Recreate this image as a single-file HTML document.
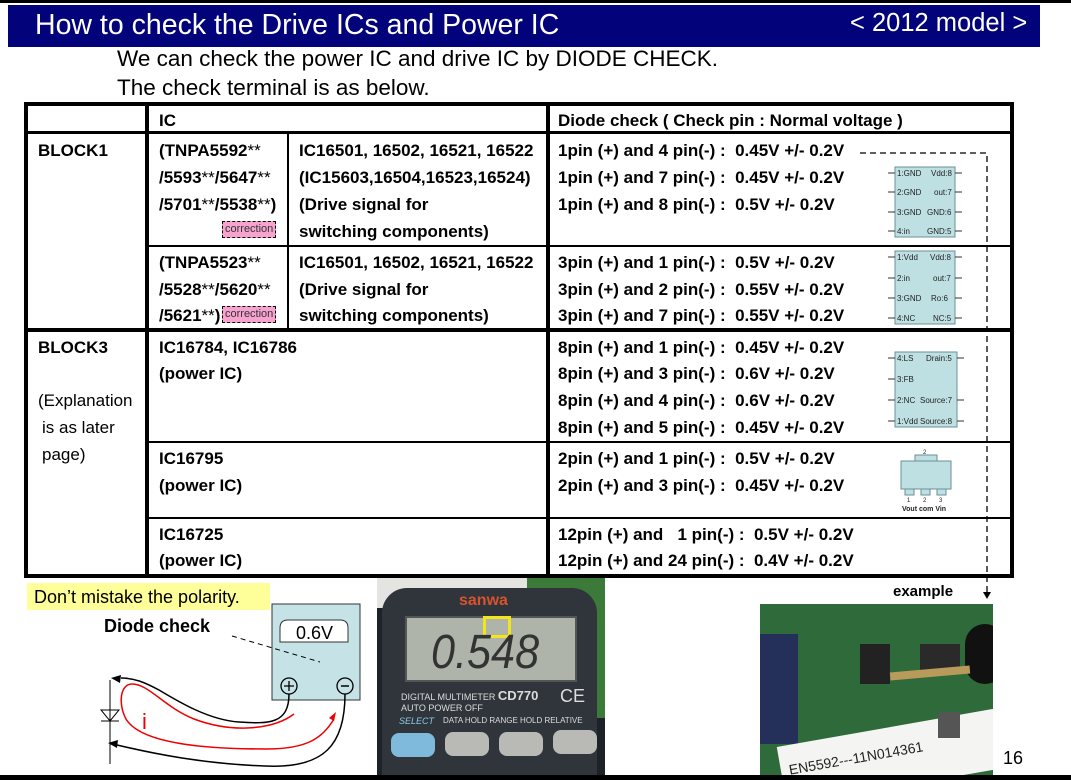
<!DOCTYPE html>
<html><head><meta charset="utf-8"><style>
*{margin:0;padding:0;box-sizing:border-box}
body{width:1071px;height:780px;background:#fff;position:relative;overflow:hidden;font-family:"Liberation Sans",Arial,sans-serif;color:#000}
.a{position:absolute}
.t{position:absolute;font-weight:bold;font-size:17px;line-height:18px;white-space:pre}
.n{position:absolute;font-size:17px;line-height:18px;white-space:pre}
.bl{position:absolute;background:#000}
.corr{position:absolute;background:#f7a3cf;border:1px dashed #000;font-size:11px;line-height:15px;padding:0 2px;color:#333}
</style></head><body>
<div class="bl" style="left:0;top:0;width:1071px;height:3px"></div>
<div class="a" style="left:8px;top:5px;width:1032px;height:42px;background:#02027a"></div>
<div class="a" style="left:35px;top:7px;color:#fff;font-size:28.5px;line-height:36px">How to check the Drive ICs and Power IC</div>
<div class="a" style="left:850px;top:6px;color:#fff;font-size:25.5px;line-height:34px">&lt; 2012 model &gt;</div>
<div class="a" style="left:117px;top:46px;font-size:22.5px;line-height:26px">We can check the power IC and drive IC by DIODE CHECK.</div>
<div class="a" style="left:117px;top:75px;font-size:22.5px;line-height:26px">The check terminal is as below.</div>

<div class="a" style="left:24px;top:102px;width:990px;height:476px;border:4px solid #000"></div>
<div class="bl" style="left:145px;top:102px;width:4px;height:476px"></div>
<div class="bl" style="left:546px;top:102px;width:4px;height:476px"></div>
<div class="bl" style="left:24px;top:131px;width:990px;height:3px"></div>
<div class="bl" style="left:287px;top:131px;width:2px;height:199px"></div>
<div class="bl" style="left:149px;top:245px;width:862px;height:2px"></div>
<div class="bl" style="left:24px;top:328px;width:990px;height:4px"></div>
<div class="bl" style="left:149px;top:441px;width:862px;height:2px"></div>
<div class="bl" style="left:149px;top:517px;width:862px;height:2px"></div>

<div class="t" style="left:159px;top:112px">IC</div>
<div class="t" style="left:558px;top:112px">Diode check ( Check pin : Normal voltage )</div>

<div class="t" style="left:38px;top:142px">BLOCK1</div>
<div class="t" style="left:159px;top:142px">(TNPA5592<span style="font-weight:normal">**</span></div>
<div class="t" style="left:159px;top:169px">/5593<span style="font-weight:normal">**</span>/5647<span style="font-weight:normal">**</span></div>
<div class="t" style="left:159px;top:196px">/5701<span style="font-weight:normal">**</span>/5538<span style="font-weight:normal">**</span>)</div>
<div class="corr" style="left:222px;top:221px">correction</div>
<div class="t" style="left:299px;top:142px">IC16501, 16502, 16521, 16522</div>
<div class="t" style="left:299px;top:169px">(IC15603,16504,16523,16524)</div>
<div class="t" style="left:299px;top:196px">(Drive signal for</div>
<div class="t" style="left:299px;top:223px">switching components)</div>
<div class="t" style="left:558px;top:142px">1pin (+) and 4 pin(-) :  0.45V +/- 0.2V</div>
<div class="t" style="left:558px;top:169px">1pin (+) and 7 pin(-) :  0.45V +/- 0.2V</div>
<div class="t" style="left:558px;top:196px">1pin (+) and 8 pin(-) :  0.5V +/- 0.2V</div>

<div class="t" style="left:159px;top:254px">(TNPA5523<span style="font-weight:normal">**</span></div>
<div class="t" style="left:159px;top:281px">/5528<span style="font-weight:normal">**</span>/5620<span style="font-weight:normal">**</span></div>
<div class="t" style="left:159px;top:307px">/5621<span style="font-weight:normal">**</span>)</div>
<div class="corr" style="left:222px;top:306px">correction</div>
<div class="t" style="left:299px;top:254px">IC16501, 16502, 16521, 16522</div>
<div class="t" style="left:299px;top:281px">(Drive signal for</div>
<div class="t" style="left:299px;top:307px">switching components)</div>
<div class="t" style="left:558px;top:254px">3pin (+) and 1 pin(-) :  0.5V +/- 0.2V</div>
<div class="t" style="left:558px;top:281px">3pin (+) and 2 pin(-) :  0.55V +/- 0.2V</div>
<div class="t" style="left:558px;top:307px">3pin (+) and 7 pin(-) :  0.55V +/- 0.2V</div>

<div class="t" style="left:38px;top:339px">BLOCK3</div>
<div class="n" style="left:38px;top:392px">(Explanation</div>
<div class="n" style="left:42px;top:419px">is as later</div>
<div class="n" style="left:42px;top:446px">page)</div>
<div class="t" style="left:159px;top:339px">IC16784, IC16786</div>
<div class="t" style="left:159px;top:365px">(power IC)</div>
<div class="t" style="left:558px;top:339px">8pin (+) and 1 pin(-) :  0.45V +/- 0.2V</div>
<div class="t" style="left:558px;top:365px">8pin (+) and 3 pin(-) :  0.6V +/- 0.2V</div>
<div class="t" style="left:558px;top:392px">8pin (+) and 4 pin(-) :  0.6V +/- 0.2V</div>
<div class="t" style="left:558px;top:419px">8pin (+) and 5 pin(-) :  0.45V +/- 0.2V</div>
<div class="t" style="left:159px;top:450px">IC16795</div>
<div class="t" style="left:159px;top:477px">(power IC)</div>
<div class="t" style="left:558px;top:450px">2pin (+) and 1 pin(-) :  0.5V +/- 0.2V</div>
<div class="t" style="left:558px;top:477px">2pin (+) and 3 pin(-) :  0.45V +/- 0.2V</div>
<div class="t" style="left:159px;top:526px">IC16725</div>
<div class="t" style="left:159px;top:552px">(power IC)</div>
<div class="t" style="left:558px;top:526px">12pin (+) and   1 pin(-) :  0.5V +/- 0.2V</div>
<div class="t" style="left:558px;top:552px">12pin (+) and 24 pin(-) :  0.4V +/- 0.2V</div>

<svg class="a" style="left:0;top:0" width="1071" height="780">
<g fill="#bfe0e3" stroke="#6a8f94" stroke-width="1">
<rect x="895" y="167" width="60" height="70"/>
<rect x="895" y="251" width="60" height="73"/>
<rect x="895" y="352" width="62" height="75"/>
<rect x="901" y="461" width="50" height="28"/>
<rect x="915" y="455" width="22" height="6"/>
<rect x="905" y="489" width="9" height="6"/><rect x="921" y="489" width="9" height="6"/><rect x="937" y="489" width="9" height="6"/>
</g>
<g stroke="#333" stroke-width="1">
<path d="M888 173h7M888 192h7M888 212h7M888 231h7M955 173h7M955 192h7M955 212h7M955 231h7"/>
<path d="M888 257h7M888 278h7M888 298h7M888 318h7M955 257h7M955 278h7M955 298h7M955 318h7"/>
<path d="M888 358h7M888 379h7M888 400h7M888 421h7M957 358h7M957 400h7M957 421h7"/>
</g>
<g font-family="Liberation Sans" font-size="8" fill="#222">
<text x="897" y="176">1:GND</text><text x="931" y="176">Vdd:8</text>
<text x="897" y="195">2:GND</text><text x="934" y="195">out:7</text>
<text x="897" y="215">3:GND</text><text x="927" y="215">GND:6</text>
<text x="897" y="234">4:in</text><text x="927" y="234">GND:5</text>
<text x="897" y="260">1:Vdd</text><text x="930" y="260">Vdd:8</text>
<text x="897" y="281">2:in</text><text x="933" y="281">out:7</text>
<text x="897" y="301">3:GND</text><text x="931" y="301">Ro:6</text>
<text x="897" y="321">4:NC</text><text x="933" y="321">NC:5</text>
<text x="897" y="361">4:LS</text><text x="926" y="361">Drain:5</text>
<text x="897" y="382">3:FB</text>
<text x="897" y="403">2:NC</text><text x="920" y="403">Source:7</text>
<text x="897" y="424">1:Vdd</text><text x="920" y="424">Source:8</text>
<text x="923" y="454" font-size="6">2</text>
<text x="907" y="502" font-size="6">1</text><text x="923" y="502" font-size="6">2</text><text x="939" y="502" font-size="6">3</text>
<text x="902" y="511" font-size="7" font-weight="bold">Vout com Vin</text>
</g>
<path d="M860 153H987V592" stroke="#000" stroke-width="1.3" fill="none" stroke-dasharray="6,4"/>
<path d="M983 592l4 7 4-7z" fill="#000"/>
<rect x="272" y="604" width="88" height="96" fill="#c5e3e6" stroke="#333"/>
<path d="M280 642v-14q0-8 8-8h52q8 0 8 8v14z" fill="#fff" stroke="#333"/>
<text x="296" y="639" font-family="Liberation Sans" font-size="18">0.6V</text>
<circle cx="289" cy="686" r="8" fill="none" stroke="#000" stroke-width="1.3"/>
<path d="M284 686h10M289 681v10" stroke="#000" stroke-width="1.3"/>
<circle cx="345" cy="686" r="8" fill="none" stroke="#000" stroke-width="1.3"/>
<path d="M341 686h8" stroke="#000" stroke-width="1.5"/>
<path d="M232 636l88 26" stroke="#000" stroke-dasharray="5,4" fill="none"/>
<path d="M110 680v84" stroke="#000"/>
<path d="M101 710h18l-9 11z M101 721h18" stroke="#000" fill="none"/>
<path d="M289 694c0 30-20 30-50 28-30-2-60-20-80-32-15-8-25-12-38-12" stroke="#000" stroke-width="1.5" fill="none"/>
<path d="M121 675l-10 3 9 5z" fill="#000"/>
<path d="M345 694c0 50-20 75-80 72-60-2-110-12-148-21" stroke="#000" stroke-width="1.5" fill="none"/>
<path d="M118 740l-10 3 9 5z" fill="#000"/>
<path d="M294 714c-20 15-60 20-100 5-30-12-45-35-62-35-12 0-14 20-6 35 15 25 80 30 140 30 40 0 56-10 68-30" stroke="#e00" stroke-width="1.5" fill="none"/>
<path d="M336 712l-7 6 5 3z" fill="#e00"/>
<text x="142" y="729" font-family="Liberation Sans" font-size="22" fill="#e00">i</text>
</svg>
<div class="a" style="left:27px;top:583px;width:243px;height:27px;background:#ffff99"></div>
<div class="a" style="left:34px;top:585px;font-size:18px;line-height:24px">Don’t mistake the polarity.</div>
<div class="a" style="left:104px;top:614px;font-size:18px;font-weight:bold;line-height:24px">Diode check</div>

<div class="a" style="left:377px;top:578px;width:228px;height:197px;background:#1c2227;overflow:hidden">
 <div class="a" style="left:0;top:0;width:228px;height:30px;background:#e4e4e0"></div>
 <div class="a" style="left:150px;top:0;width:78px;height:140px;background:#3c7a3a"></div>
 <div class="a" style="left:5px;top:10px;width:215px;height:190px;background:#2f353b;border-radius:25px 25px 0 0"></div>
 <div class="a" style="left:82px;top:14px;color:#d9522e;font-weight:bold;font-size:16px">sanwa</div>
 <div class="a" style="left:28px;top:38px;width:172px;height:66px;background:#aeb4aa;border:2px solid #555"></div>
 <div class="a" style="left:106px;top:38px;width:28px;height:22px;border:3px solid #f4e51a"></div>
 <div class="a" style="left:48px;top:50px;font-size:48px;color:#333;line-height:50px;font-style:italic;transform:scaleX(0.9)">0.548</div>
 <div class="a" style="left:24px;top:112px;color:#ddd;font-size:9px;line-height:11px">DIGITAL MULTIMETER <b style="font-size:13px">CD770</b><br>AUTO POWER OFF</div>
 <div class="a" style="left:183px;top:108px;color:#ddd;font-size:18px">CE</div>
 <div class="a" style="left:22px;top:138px;color:#8cc8e8;font-size:9px;font-style:italic">SELECT</div>
 <div class="a" style="left:66px;top:138px;color:#ddd;font-size:8px">DATA HOLD  RANGE HOLD  RELATIVE</div>
 <div class="a" style="left:14px;top:155px;width:44px;height:24px;background:#7fbadc;border-radius:8px"></div>
 <div class="a" style="left:68px;top:154px;width:44px;height:24px;background:#b9bab5;border-radius:8px"></div>
 <div class="a" style="left:122px;top:154px;width:44px;height:24px;background:#b9bab5;border-radius:8px"></div>
 <div class="a" style="left:176px;top:152px;width:44px;height:24px;background:#b9bab5;border-radius:8px"></div>
</div>

<div class="a" style="left:893px;top:582px;font-size:15px;font-weight:bold;line-height:20px">example</div>
<div class="a" style="left:760px;top:604px;width:233px;height:171px;background:#2f6a3a;overflow:hidden">
 <div class="a" style="left:0;top:30px;width:38px;height:110px;background:#24305a"></div>
 <div class="a" style="left:100px;top:40px;width:30px;height:40px;background:#222"></div>
 <div class="a" style="left:160px;top:40px;width:40px;height:30px;background:#2a2a2a"></div>
 <div class="a" style="left:205px;top:20px;width:40px;height:60px;background:#111;border-radius:20px"></div>
 <div class="a" style="left:130px;top:65px;width:80px;height:8px;background:#b89a5a;transform:rotate(-5deg)"></div>
 <div class="a" style="left:20px;top:120px;width:260px;height:60px;background:#f4f4f2;transform:rotate(-10deg)"></div>
 <div class="a" style="left:28px;top:146px;font-size:14px;color:#222;transform:rotate(-10deg)">EN5592---11N014361</div>
 <div class="a" style="left:178px;top:108px;width:22px;height:26px;background:#555"></div>
</div>
<div class="a" style="left:1003px;top:746px;font-size:18px;line-height:24px">16</div>
<div class="bl" style="left:0;top:775px;width:1071px;height:5px"></div>
</body></html>
